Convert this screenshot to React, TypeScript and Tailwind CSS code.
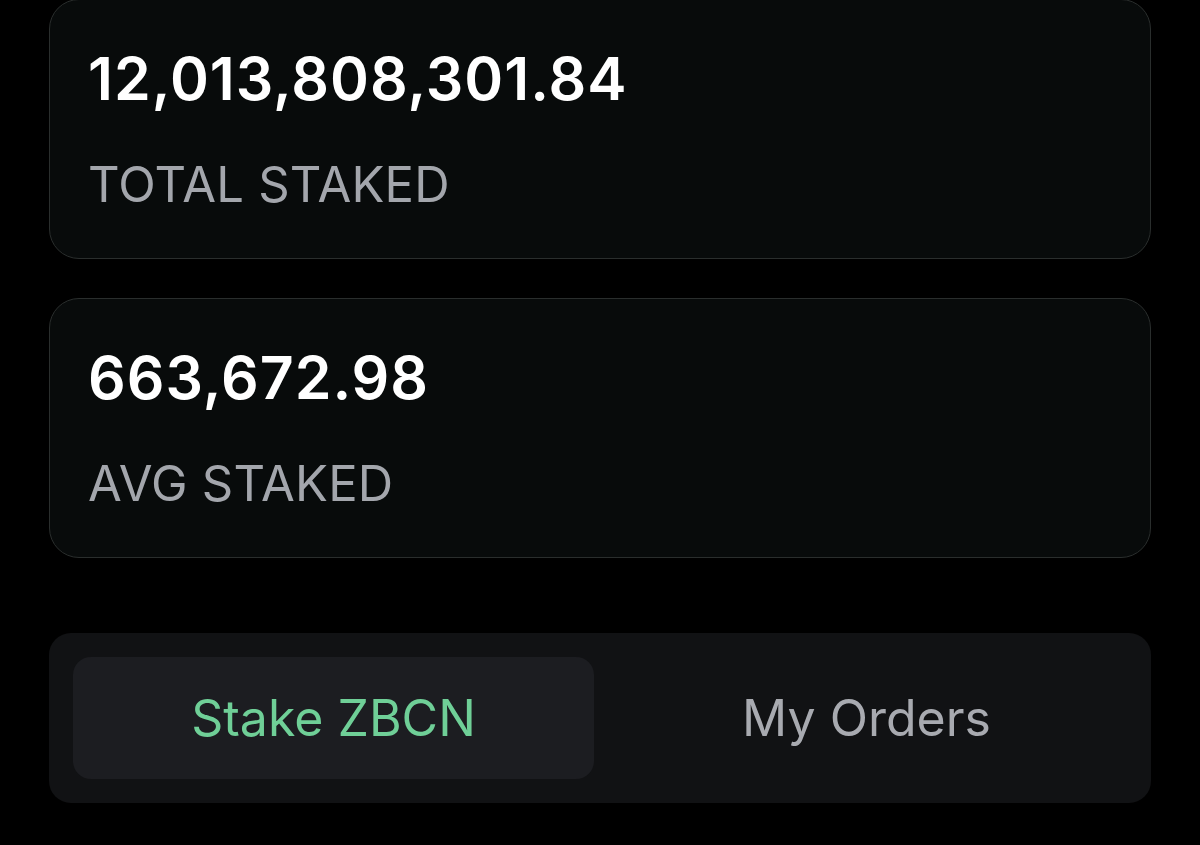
import React from "react";

const STATS = [
  { value: "12,013,808,301.84", label: "TOTAL STAKED" },
  { value: "663,672.98", label: "AVG STAKED" },
];

function StatCard({ value, label }: { value: string; label: string }) {
  return (
    <div className="flex flex-col rounded-[30px] border border-[#2a2e2d] bg-[#080b0b] px-[38px] pt-[50px] pb-[49px]">
      <span className="text-[59px] leading-[58px] font-semibold text-white tracking-[1px]">{value}</span>
      <span className="mt-[52px] text-[49px] leading-[49px] font-normal text-[#a3a6ac] tracking-[0.2px]">{label}</span>
    </div>
  );
}

export default function App() {
  return (
    <div
      className="min-h-[845px] w-[1200px] overflow-hidden bg-black px-[49px]"
      style={{ fontFamily: "Inter, 'Liberation Sans', sans-serif" }}
    >
      <div className="-mt-px flex flex-col gap-[39px]">
        {STATS.map((s) => (
          <StatCard key={s.label} value={s.value} label={s.label} />
        ))}
      </div>
      <div className="mt-[75px] grid grid-cols-2 gap-[12px] rounded-[22px] bg-[#111214] p-[24px]">
        <button className="flex h-[122px] items-center justify-center rounded-[18px] bg-[#1c1d21] text-[50px] font-normal text-[#6fcf97]">
          Stake ZBCN
        </button>
        <button className="flex h-[122px] items-center justify-center rounded-[18px] text-[50px] font-normal text-[#a8aab0]">
          My Orders
        </button>
      </div>
    </div>
  );
}
